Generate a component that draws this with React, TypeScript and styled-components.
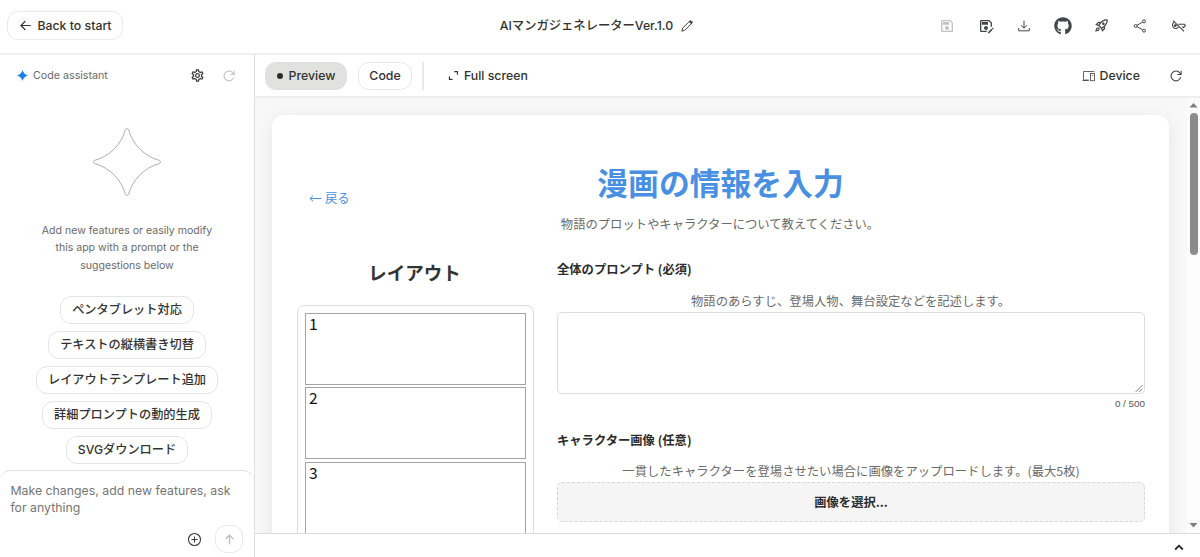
import React from "react";
import styled, { createGlobalStyle, css } from "styled-components";
import { MdOutlineSave, MdOutlineSaveAs, MdOutlineRocketLaunch, MdOutlineSettings } from "react-icons/md";
import { FaGithub } from "react-icons/fa";

const UI = `Inter, "Noto Sans CJK JP", sans-serif`;
const JP = `"Noto Sans CJK JP", sans-serif`;

const GlobalStyle = createGlobalStyle`
  * { box-sizing: border-box; }
  body { margin: 0; background: #fff; color: #323332; font-family: ${UI}; overflow: hidden; }
  button { font: inherit; color: inherit; margin: 0; cursor: pointer; }
`;

const Page = styled.div`
  display: flex;
  flex-direction: column;
  width: 1200px;
  height: 557px;
  overflow: hidden;
`;

const Header = styled.header`
  display: grid;
  grid-template-columns: 1fr auto 1fr;
  align-items: center;
  flex: none;
  height: 55px;
  padding: 0 2px 2px 7px;
  border-bottom: 2px solid #efefef;
`;

const OutlineButton = styled.button<{ $active?: boolean; $width: number }>`
  display: inline-flex;
  align-items: center;
  justify-content: center;
  gap: 6px;
  width: ${(p) => p.$width}px;
  height: 28px;
  padding: 0;
  border: 1px solid ${(p) => (p.$active ? "#e1e2df" : "#e8e9e8")};
  border-radius: 11px;
  background: ${(p) => (p.$active ? "#e1e2df" : "#fff")};
  font-size: 12.3px;
  font-weight: 500;
  line-height: 16px;
  white-space: nowrap;
`;

const BackButton = styled(OutlineButton)`
  height: 29px;
  padding-left: 2px;
`;

const AppTitle = styled.div`
  display: flex;
  align-items: center;
  gap: 8px;
  padding-right: 12px;
  font-size: 12.3px;
  font-weight: 500;
  line-height: 18px;
  white-space: nowrap;
`;

const HeaderActions = styled.div`
  display: flex;
  justify-content: flex-end;
`;

const IconCell = styled.span<{ $muted?: boolean }>`
  display: flex;
  align-items: center;
  justify-content: center;
  width: 38.6px;
  height: 28px;
  color: ${(p) => (p.$muted ? "#c2c2c2" : "#444546")};
`;

const Body = styled.div`
  display: flex;
  flex: 1;
  min-height: 0;
`;

const Sidebar = styled.aside`
  display: flex;
  flex-direction: column;
  flex: none;
  width: 255px;
  border-right: 1px solid #dfdfdf;
`;

const AssistantBar = styled.div`
  display: flex;
  align-items: center;
  height: 41px;
  padding: 0 19.5px 0 17px;
`;

const AssistantName = styled.span`
  flex: 1;
  margin-left: 5px;
  color: #6a6a6a;
  font-size: 10.7px;
  line-height: 16px;
`;

const BarIcons = styled.div`
  display: flex;
  align-items: center;
  gap: 18px;
`;

const Intro = styled.div`
  display: flex;
  flex-direction: column;
  align-items: center;
  padding-top: 31px;
`;

const IntroText = styled.p`
  margin: 24.5px 0 0;
  width: 182px;
  color: #6a6a6a;
  font-size: 10.56px;
  line-height: 17.6px;
  text-align: center;
`;

const Chips = styled.div`
  display: flex;
  flex-direction: column;
  align-items: center;
  gap: 7.1px;
  margin-top: 21.5px;
`;

const Chip = styled.button`
  height: 28px;
  padding: 0 11px;
  border: 1px solid #e4e5e4;
  border-radius: 11px;
  background: #fff;
  font-size: 12.2px;
  font-weight: 500;
  line-height: 24px;
  white-space: nowrap;
`;

const Composer = styled.div`
  display: flex;
  flex-direction: column;
  justify-content: space-between;
  height: 87px;
  margin-top: auto;
  padding: 11px 11px 4px 10.4px;
  border-top: 1px solid #e2e2e2;
  border-radius: 11px 11px 0 0;
  color: #757575;
  font-size: 12.32px;
  line-height: 17.4px;
`;

const ComposerActions = styled.div`
  display: flex;
  align-items: center;
  justify-content: flex-end;
  gap: 13px;
`;

const Main = styled.main`
  display: flex;
  flex-direction: column;
  flex: 1;
  min-width: 0;
`;

const Toolbar = styled.div`
  display: flex;
  align-items: center;
  flex: none;
  height: 43px;
  padding: 0 5px 0 10px;
  border-bottom: 2px solid #efefef;
`;

const Tabs = styled.div`
  display: flex;
  gap: 11px;
`;

const Dot = styled.span`
  width: 6px;
  height: 6px;
  border-radius: 50%;
  background: #2a2a2a;
`;

const Divider = styled.span`
  width: 1.5px;
  height: 28px;
  margin: 0 24.5px 0 10px;
  background: #e8e8e8;
`;

const ToolLabel = styled.span<{ $push?: boolean }>`
  display: flex;
  align-items: center;
  gap: 5px;
  font-size: 12.3px;
  font-weight: 500;
  line-height: 16px;
  ${(p) =>
    p.$push &&
    css`
      gap: 4px;
      margin-left: auto;
      margin-right: 16.5px;
    `}
`;

const Viewport = styled.div`
  display: flex;
  flex: 1;
  min-height: 0;
  background: #f8f8f8;
  overflow: hidden;
`;

const Canvas = styled.div`
  flex: 1;
  padding: 17px 18px 0 17px;
  overflow: hidden;
`;

const Scrollbar = styled.div`
  display: flex;
  flex-direction: column;
  align-items: center;
  width: 13px;
  padding: 5px 0;
  background: #fcfcfc;
`;

const Thumb = styled.div`
  width: 8px;
  height: 142px;
  margin-top: 5px;
  margin-bottom: auto;
  border-radius: 4px;
  background: #8b8b8b;
`;

const Card = styled.section`
  height: 700px;
  padding: 47px 24px 0 25px;
  border-radius: 12px;
  background: #fff;
  box-shadow: 0 4px 18px rgba(0, 0, 0, 0.08);
  font-family: ${JP};
`;

const CardHeader = styled.div`
  display: grid;
  grid-template-columns: 1fr auto 1fr;
  align-items: start;
`;

const BackLink = styled.a`
  display: flex;
  align-items: center;
  gap: 3px;
  margin: 26px 0 0 12px;
  color: #4a90e2;
  font-size: 12.3px;
  line-height: 20px;
`;

const CardTitle = styled.h1`
  margin: 0;
  padding-right: 1px;
  color: #4a90e2;
  font-size: 30.8px;
  font-weight: 700;
  line-height: 40px;
`;

const Lead = styled.p`
  margin: 6px 0 0;
  padding-right: 2px;
  color: #6a6a6a;
  font-size: 12.32px;
  line-height: 20px;
  text-align: center;
`;

const Columns = styled.div`
  display: grid;
  grid-template-columns: 237px 588px;
  gap: 23px;
  margin-top: 25px;
`;

const SectionTitle = styled.h2`
  margin: 0 0 19px;
  padding-right: 2px;
  color: #333;
  font-size: 18.5px;
  font-weight: 700;
  line-height: 27px;
  text-align: center;
`;

const Panels = styled.div`
  display: flex;
  flex-direction: column;
  gap: 2.4px;
  height: 330px;
  padding: 7px;
  border: 1px solid #ddd;
  border-radius: 7px;
`;

const Panel = styled.div`
  flex: none;
  height: 72px;
  padding: 0 3px;
  border: 1.4px solid #a5a5a5;
  color: #111;
  font-size: 15.5px;
  line-height: 18px;
`;

const FieldLabel = styled.label<{ $top: number }>`
  display: block;
  margin-top: ${(p) => p.$top}px;
  color: #2c2c2c;
  font-size: 12.3px;
  font-weight: 700;
  line-height: 20px;
`;

const Help = styled.p<{ $tight?: boolean }>`
  margin: ${(p) => (p.$tight ? 11 : 12)}px 0 1px;
  padding-right: ${(p) => (p.$tight ? 0 : 1)}px;
  color: #6a6a6a;
  font-size: 12.34px;
  line-height: 20px;
  text-align: center;
`;

const TextArea = styled.div`
  display: flex;
  align-items: flex-end;
  justify-content: flex-end;
  height: 82px;
  border: 1px solid #ddd;
  border-radius: 5px;
`;

const Counter = styled.div`
  color: #555;
  font-family: "Liberation Sans", sans-serif;
  font-size: 9.86px;
  line-height: 19px;
  text-align: right;
`;

const Upload = styled.div`
  display: flex;
  align-items: center;
  justify-content: center;
  height: 40px;
  padding-bottom: 1px;
  border: 1px dashed #d8d8d8;
  border-radius: 5px;
  background: #f5f5f5;
  color: #2c2c2c;
  font-size: 12.3px;
  font-weight: 700;
  line-height: 18px;
`;

const Footer = styled.footer`
  display: flex;
  align-items: center;
  justify-content: flex-end;
  flex: none;
  height: 24px;
  padding: 4px 16px 0 0;
  border-top: 1px solid #dcdcdc;
`;

type GlyphProps = { w?: number; h?: number; box?: string; sw?: number; color?: string; children: React.ReactNode };

const Svg = styled.svg`
  flex: none;
`;

const Glyph = ({ w = 16, h = w, box = "0 0 24 24", sw = 1.5, color = "currentColor", children }: GlyphProps) => (
  <Svg width={w} height={h} viewBox={box} fill="none" stroke={color} strokeWidth={sw}>
    {children}
  </Svg>
);

const ArrowLeft = () => (
  <Glyph w={11} box="0 0 11 11" sw={1.1}>
    <path d="M10.700 5.500H1.200M5.400 1 .9 5.500l4.500 4.500" />
  </Glyph>
);

const Pencil = () => (
  <Glyph w={12} box="0 0 12 12" sw={0.9}>
    <path d="M.8 11.200 1.700 8 8.900 1q.8-.7 1.600 0l.5.5q.7.8 0 1.600L3.900 10.200Z" />
    <path d="m8.700 1.300 2 2" strokeWidth={1.7} />
  </Glyph>
);

const Download = () => (
  <Glyph>
    <path d="M12 4v11M7.500 10.800 12 15.300l4.500-4.500M4 15v4.200h16V15" />
  </Glyph>
);

const Share = () => (
  <Glyph>
    <circle cx="5.5" cy="12" r="2.2" />
    <circle cx="18" cy="5" r="2.2" />
    <circle cx="18" cy="19" r="2.2" />
    <path d="m7.600 10.900 8.300-4.700M7.600 13.100l8.300 4.700" />
  </Glyph>
);

const KeyOff = () => (
  <Glyph w={15} h={12} box="0 0 15 12" sw={1.1}>
    <path d="M2 .6 13 11.400M3 2.200A3.400 3.400 0 1 0 7.500 7.200M7.200 4.300h6.300l.9 1.200-2 2.200-1.200-1" />
    <circle cx="4.3" cy="5.6" r=".9" fill="currentColor" />
  </Glyph>
);

const Refresh = ({ color }: { color?: string }) => (
  <Glyph w={12} box="0 0 12 12" sw={1.1} color={color}>
    <path d="M10.700 7.200A4.900 4.900 0 1 1 9.900 3L11 4.400M11.100.7v3.800H7.300" />
  </Glyph>
);

const Expand = () => (
  <Glyph w={11} box="0 0 11 11" sw={1.1}>
    <path d="M6.300 1.600h3.100v3.100M1.400 6.300v3.100h3.100" />
  </Glyph>
);

const Devices = () => (
  <Glyph w={14} h={12} box="0 0 14 12" sw={0.9} color="#555">
    <path d="M12.300 1.500H1.500v8M10.300 5.500h.9" />
    <path d="M.5 10.300h6.300" strokeWidth={1.4} />
    <rect x="8.5" y="3.5" width="4" height="7.2" />
  </Glyph>
);

const Caret = ({ down }: { down?: boolean }) => (
  <Glyph w={9} h={5} box="0 0 9 5" sw={0}>
    <path d={down ? "M.5 0h8L4.500 4.500Z" : "M.5 4.500h8L4.500 0Z"} fill="#7d7d7d" />
  </Glyph>
);

const suggestions = [
  "ペンタブレット対応",
  "テキストの縦横書き切替",
  "レイアウトテンプレート追加",
  "詳細プロンプトの動的生成",
  "SVGダウンロード",
];

export default function App() {
  return (
    <Page>
      <GlobalStyle />
      <Header>
        <BackButton $width={116}>
          <ArrowLeft />
          Back to start
        </BackButton>
        <AppTitle>
          AIマンガジェネレーターVer.1.0
          <Pencil />
        </AppTitle>
        <HeaderActions>
          <IconCell $muted><MdOutlineSave size={16} /></IconCell>
          <IconCell><MdOutlineSaveAs size={16} /></IconCell>
          <IconCell><Download /></IconCell>
          <IconCell><FaGithub size={18} /></IconCell>
          <IconCell><MdOutlineRocketLaunch size={15} /></IconCell>
          <IconCell><Share /></IconCell>
          <IconCell><KeyOff /></IconCell>
        </HeaderActions>
      </Header>
      <Body>
        <Sidebar>
          <AssistantBar>
            <Glyph w={11} box="0 0 11 11" sw={0}>
              <path d="M5.500 0Q6.600 4.400 11 5.500 6.600 6.600 5.500 11 4.400 6.600 0 5.500 4.400 4.400 5.500 0Z" fill="#1a80e8" />
            </Glyph>
            <AssistantName>Code assistant</AssistantName>
            <BarIcons>
              <MdOutlineSettings size={15} color="#3a3a3a" />
              <Refresh color="#c2c2c2" />
            </BarIcons>
          </AssistantBar>
          <Intro>
            <Glyph w={70} box="0 0 70 70" sw={0.8} color="#999">
              <path d="M33.400 2.600Q35 .2 36.600 2.600C40.500 17.500 52.500 29.500 67.400 33.400Q69.800 35 67.400 36.600C52.500 40.500 40.500 52.500 36.600 67.400Q35 69.800 33.400 67.400C29.500 52.500 17.500 40.500 2.600 36.600Q.2 35 2.600 33.400C17.500 29.500 29.500 17.500 33.400 2.600Z" />
            </Glyph>
            <IntroText>
              Add new features or easily modify this app with a prompt or the suggestions below
            </IntroText>
          </Intro>
          <Chips>
            {suggestions.map((s) => (
              <Chip key={s}>{s}</Chip>
            ))}
          </Chips>
          <Composer>
            <span>Make changes, add new features, ask for anything</span>
            <ComposerActions>
              <Glyph w={15} box="0 0 15 15" sw={1.1} color="#3a3a3a">
                <circle cx="7.5" cy="7.5" r="6" />
                <path d="M7.500 4.500v6M4.500 7.500h6" />
              </Glyph>
              <OutlineButton $width={28}>
                <Glyph w={11} box="0 0 11 11" sw={1.2} color="#bbb">
                  <path d="M5.500 10.500V1.200M1.500 5.200l4-4 4 4" />
                </Glyph>
              </OutlineButton>
            </ComposerActions>
          </Composer>
        </Sidebar>
        <Main>
          <Toolbar>
            <Tabs>
              <OutlineButton $width={82} $active>
                <Dot />
                Preview
              </OutlineButton>
              <OutlineButton $width={54}>Code</OutlineButton>
            </Tabs>
            <Divider />
            <ToolLabel>
              <Expand />
              Full screen
            </ToolLabel>
            <ToolLabel $push>
              <Devices />
              Device
            </ToolLabel>
            <IconCell><Refresh /></IconCell>
          </Toolbar>
          <Viewport>
            <Canvas>
              <Card>
                <CardHeader>
                  <BackLink>
                    <Glyph w={13} h={9} box="0 0 13 9" sw={1}>
                      <path d="M12.500 4.500H1M4 1.700 1 4.500l3 2.800" />
                    </Glyph>
                    戻る
                  </BackLink>
                  <CardTitle>漫画の情報を入力</CardTitle>
                </CardHeader>
                <Lead>物語のプロットやキャラクターについて教えてください。</Lead>
                <Columns>
                  <div>
                    <SectionTitle>レイアウト</SectionTitle>
                    <Panels>
                      {[1, 2, 3].map((n) => (
                        <Panel key={n}>{n}</Panel>
                      ))}
                    </Panels>
                  </div>
                  <div>
                    <FieldLabel $top={0}>全体のプロンプト (必須)</FieldLabel>
                    <Help>物語のあらすじ、登場人物、舞台設定などを記述します。</Help>
                    <TextArea>
                      <Glyph w={9} box="0 0 9 9" sw={1} color="#777">
                        <path d="M.8 7.800 7.300 1.300M4.300 7.800l3-3" />
                      </Glyph>
                    </TextArea>
                    <Counter>0 / 500</Counter>
                    <FieldLabel $top={17}>キャラクター画像 (任意)</FieldLabel>
                    <Help $tight>一貫したキャラクターを登場させたい場合に画像をアップロードします。(最大5枚)</Help>
                    <Upload>画像を選択...</Upload>
                  </div>
                </Columns>
              </Card>
            </Canvas>
            <Scrollbar>
              <Caret />
              <Thumb />
              <Caret down />
            </Scrollbar>
          </Viewport>
          <Footer>
            <Glyph w={10} h={7} box="0 0 10 7" sw={1.8} color="#222">
              <path d="m1.200 5.500 3.800-3.800 3.800 3.800" />
            </Glyph>
          </Footer>
        </Main>
      </Body>
    </Page>
  );
}
